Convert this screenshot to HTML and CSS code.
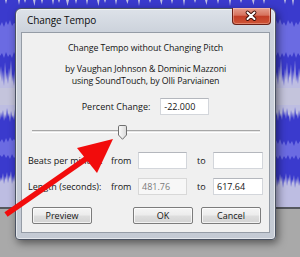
FILE: index.html
```html
<!DOCTYPE html>
<html>
<head>
<meta charset="utf-8">
<link rel="stylesheet" href="styles.css">
</head>
<body>
<div class="desk">
  <svg class="bg" width="300" height="257" viewBox="0 0 300 257">
    <rect width="300" height="257" fill="#a9a9a9"/>
    <rect width="300" height="88" fill="#bdbde2"/>
    <rect y="88" width="300" height="17" fill="#c4c4dc"/>
    <rect y="105" width="300" height="102" fill="#bdbde2"/>
    <rect y="207" width="300" height="2" fill="#55585e"/>
    <path fill="#3a3acd" d="M0,0 H300 V78 L299,68 298,84 297,74 296,82 295,60 294,80 293,70 292,86 291,64 290,78 289,72 288,84 287,62 286,80 285,68 284,86 283,74 282,82 281,58 280,78 279,66 278,85 277,72 276,80 275,60 274,86 273,78 272,64 271,84 270,70 L16,80 L15,70 14,86 13,74 12,82 11,60 10,78 9,68 8,84 7,72 6,80 5,62 4,86 3,70 2,82 1,66 0,78 Z"/>
    <path fill="#bdbde2" d="M5,0 l1,4 l1,-4Z M18,0 l1,5 l1,-5Z M24,0 l1,3 l1,-3Z M33,0 l1.5,6 l1,-6Z M41,0 l1,4 l1,-4Z M52,0 l1,5 l1,-5Z M58,0 l1,3 l1,-3Z M66,0 l1.5,6 l1.5,-6Z M75,0 l1,4 l1,-4Z M86,0 l1,5 l1,-5Z M97,0 l1.5,6 l1,-6Z M104,0 l1,3 l1,-3Z M115,0 l1,5 l1,-5Z M126,0 l1.5,4 l1,-4Z M138,0 l1,6 l1,-6Z M149,0 l1,3 l1,-3Z M160,0 l1.5,5 l1,-5Z M171,0 l1,4 l1,-4Z M183,0 l1,6 l1,-6Z M194,0 l1,3 l1,-3Z M205,0 l1.5,5 l1,-5Z M217,0 l1,4 l1,-4Z M229,0 l1,6 l1,-6Z M240,0 l1,3 l1,-3Z M252,0 l1.5,5 l1,-5Z M263,0 l1,4 l1,-4Z M284,0 l1,4 l1,-4Z M292,0 l1,6 l1,-6Z"/>
    <path fill="#6b6be2" d="M0,26 L2,22 4,27 6,21 8,25 10,20 12,26 14,23 16,24 V56 L14,52 12,58 10,54 8,57 6,52 4,58 2,53 0,56 Z M270,25 L272,21 274,26 276,20 278,24 280,19 282,25 284,22 286,26 288,20 290,24 292,21 294,27 296,22 298,25 300,21 V56 L298,53 296,58 294,52 292,57 290,54 288,58 286,52 284,57 282,53 280,58 278,52 276,56 274,53 272,58 270,54 Z"/>
    <path fill="#3a3acd" d="M0,120 L1,112 2,118 3,110 4,121 5,114 6,119 7,108 8,117 9,113 10,122 11,111 12,118 13,115 14,120 15,109 16,116 L270,114 271,108 272,118 273,111 274,120 275,106 276,116 277,112 278,121 279,109 280,117 281,113 282,120 283,107 284,116 285,111 286,119 287,108 288,117 289,114 290,122 291,110 292,118 293,112 294,120 295,107 296,116 297,113 298,119 299,110 300,117 V180 L299,186 298,176 297,184 296,178 295,188 294,175 293,183 292,179 291,187 290,174 289,182 288,177 287,186 286,173 285,183 284,178 283,188 282,176 281,182 280,174 279,185 278,179 277,187 276,176 275,182 274,173 273,184 272,178 271,186 270,177 L16,180 15,174 14,182 13,176 12,184 11,171 10,179 9,175 8,183 7,172 6,180 5,176 4,184 3,173 2,181 1,177 0,182 Z"/>
    <path fill="#6b6be2" d="M0,142 L2,139 4,143 6,138 8,142 10,137 12,141 14,139 16,142 V156 L14,158 12,154 10,159 8,155 6,158 4,154 2,157 0,155 Z M270,145 L272,141 274,146 276,140 278,144 280,139 282,145 284,141 286,146 288,140 290,144 292,141 294,146 296,140 298,144 300,141 V157 L298,160 296,155 294,159 292,156 290,160 288,155 286,159 284,156 282,160 280,155 278,159 276,156 274,160 272,155 270,158 Z"/>
  </svg>

  <div class="win">
    <div class="titlebar">
      <span class="title">Change Tempo</span>
      <div class="close">
        <svg width="39" height="17" viewBox="0 0 39 17">
          <path d="M15.5,4.5 L22.5,11 M22.5,4.5 L15.5,11" stroke="#3a0d06" stroke-width="3.8" stroke-linecap="round"/>
          <path d="M15.5,4.5 L22.5,11 M22.5,4.5 L15.5,11" stroke="#ffffff" stroke-width="2" stroke-linecap="round"/>
        </svg>
      </div>
    </div>
    <div class="client">
      <p class="line l1">Change Tempo without Changing Pitch</p>
      <p class="line l2">by Vaughan Johnson &amp; Dominic Mazzoni</p>
      <p class="line l3">using SoundTouch, by Olli Parviainen</p>
      <div class="pct">
        <span>Percent Change:</span>
        <div class="tb">-22.000</div>
      </div>
      <div class="slider">
        <div class="track"></div>
        <svg class="thumb" style="left:86px" width="9" height="15" viewBox="0 0 9 15">
          <defs>
            <linearGradient id="tg" x1="0" y1="0" x2="1" y2="0">
              <stop offset="0" stop-color="#fbfbfb"/>
              <stop offset="1" stop-color="#d9d9d9"/>
            </linearGradient>
          </defs>
          <path d="M1.8,0.5 H7.2 Q8.5,0.5 8.5,1.8 V10 L4.5,14.3 L0.5,10 V1.8 Q0.5,0.5 1.8,0.5 Z" fill="url(#tg)" stroke="#6f6f6f" stroke-width="1"/>
        </svg>
      </div>
      <div class="grid">
        <span>Beats per minute:</span><span>from</span><div class="tb"></div><span class="to">to</span><div class="tb wide"></div>
        <span>Length (seconds):</span><span>from</span><div class="tb dis">481.76</div><span class="to">to</span><div class="tb wide">617.64</div>
      </div>
      <div class="btns">
        <div class="btn">Preview</div>
        <div class="btn ok">OK</div>
        <div class="btn cancel">Cancel</div>
      </div>
    </div>
  </div>

  <svg class="arrow" width="300" height="257" viewBox="0 0 300 257">
    <path d="M6,214.5 L90,156" stroke="#f20c0c" stroke-width="5.5"/>
    <path d="M113,139 L77,148 L97,173 Z" fill="#f20c0c"/>
  </svg>
</div>
</body>
</html>
```

FILE: styles.css
```css
* { box-sizing: border-box; }
html, body { margin: 0; padding: 0; }
body {
  width: 300px;
  height: 257px;
  overflow: hidden;
  font-family: "Open Sans", "Noto Sans", sans-serif;
  font-size: 9px;
  color: #151515;
}
.desk { position: relative; width: 300px; height: 257px; overflow: hidden; }
.bg { position: absolute; left: 0; top: 0; display: block; }
.arrow { position: absolute; left: 0; top: 0; display: block; pointer-events: none; }

.win {
  position: absolute;
  left: 15px;
  top: 8px;
  width: 261px;
  height: 232px;
  border: 1px solid #4b5362;
  border-radius: 6px 6px 4px 4px;
  background: linear-gradient(180deg, #dde2e9 0px, #cdd3dc 22px, #c4cad4 100%);
  padding: 0 5px 6px 5px;
  box-shadow: 2px 3px 9px rgba(0,0,0,0.5), inset 0 0 0 1px rgba(255,255,255,0.55);
  display: flex;
  flex-direction: column;
}
.titlebar { position: relative; height: 23px; padding: 4px 0 0 6px; }
.title { font-size: 10px; line-height: 14px; color: #0c0c0c; letter-spacing: -0.1px; }
.close {
  position: absolute;
  right: -1px;
  top: -1px;
  width: 39px;
  height: 17px;
  border: 1px solid #6a2016;
  border-top: none;
  border-radius: 0 0 4px 4px;
  background: linear-gradient(180deg, #e6a090 0%, #d6725d 45%, #c23e27 52%, #cf5436 100%);
  box-shadow: inset 0 0 0 1px rgba(255,220,210,0.35);
}
.close svg { display: block; position: absolute; left: -1px; top: 0; }

.client {
  width: 249px;
  height: 201px;
  border: 1px solid #959ca6;
  background: #f0f0f0;
  display: flex;
  flex-direction: column;
}
.line {
  margin: 0;
  text-align: center;
  font-size: 8.8px;
  line-height: 11px;
  white-space: nowrap;
  letter-spacing: -0.1px;
}
.l1 { margin-top: 10px; }
.l2 { margin-top: 10px; }
.l3 { margin-top: 1px; }

.pct {
  display: flex;
  justify-content: center;
  align-items: center;
  gap: 10px;
  margin-top: 11px;
  height: 17px;
}
.tb {
  width: 49px;
  height: 17px;
  background: #fff;
  border: 1px solid #d3d6db;
  border-top-color: #b4b7bd;
  padding-left: 3px;
  line-height: 15px;
  white-space: nowrap;
}
.tb.wide { width: 50px; }
.tb.dis { background: #f7f7f7; color: #7a7a7a; border-color: #d8d8d8; }

.slider { position: relative; margin: 10px 0 0 10px; width: 228px; height: 15px; }
.track {
  margin-top: 5px;
  height: 3px;
  background: #e6e6e6;
  border-top: 1px solid #a7a7a7;
  border-bottom: 1px solid #ffffff;
}
.thumb { position: absolute; top: 0; display: block; }

.grid {
  display: grid;
  grid-template-columns: 83px 27px 49px 26px 50px;
  grid-auto-rows: 17px;
  row-gap: 9px;
  align-items: center;
  margin: 12px 0 0 6px;
  white-space: nowrap;
}
.grid .to { padding-left: 10px; }

.btns { display: flex; margin-top: 12px; padding: 0 8px 0 10px; }
.btn {
  width: 60px;
  height: 17px;
  border: 1px solid #7c7c7c;
  border-radius: 2px;
  background: linear-gradient(180deg, #f5f5f5 0%, #ececec 48%, #dedede 52%, #d3d3d3 100%);
  box-shadow: inset 0 0 0 1px rgba(255,255,255,0.7);
  text-align: center;
  line-height: 15px;
}
.ok { margin-left: auto; }
.cancel { margin-left: 8px; }
```
